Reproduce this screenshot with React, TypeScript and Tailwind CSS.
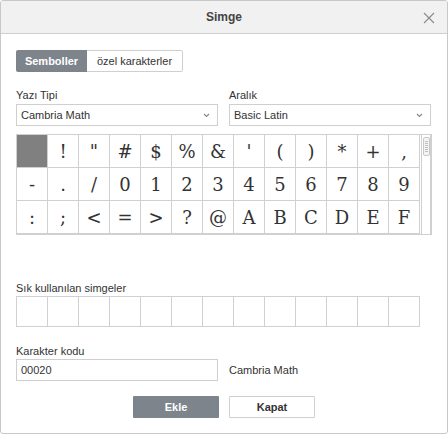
import React from "react";

const glyphs = [
  " ", "!", "\"", "#", "$", "%", "&", "'", "(", ")", "*", "+", ",",
  "-", ".", "/", "0", "1", "2", "3", "4", "5", "6", "7", "8", "9",
  ":", ";", "<", "=", ">", "?", "@", "A", "B", "C", "D", "E", "F",
];

function Chevron() {
  return (
    <svg width="7" height="5" viewBox="0 0 7 5" className="absolute right-[7px] top-[8px]">
      <path d="M1 1 L3.5 3.5 L6 1" fill="none" stroke="#888" strokeWidth="1.1" />
    </svg>
  );
}

function Select({ value }: { value: string }) {
  return (
    <div className="relative h-[22px] border border-[#cfcfcf] bg-white pl-[4px] text-[11px] leading-[20px] text-[#333]">
      {value}
      <Chevron />
    </div>
  );
}

export default function App() {
  return (
    <div
      className="w-[448px] h-[434px] flex flex-col bg-white border border-[#c8c8c8] rounded-[3px] overflow-hidden text-[#333]"
      style={{ fontFamily: '"Liberation Sans", Arial, sans-serif' }}
    >
      <div className="relative h-[33px] shrink-0 bg-[#f1f1f1] border-b border-[#cfcfcf] flex items-center justify-center">
        <span className="text-[12px] font-bold text-[#444]">Simge</span>
        <svg width="12" height="12" viewBox="0 0 12 12" className="absolute right-[12px] top-[11px]">
          <path d="M1 1 L11 11 M11 1 L1 11" stroke="#8a8a8a" strokeWidth="1.1" />
        </svg>
      </div>

      <div className="px-[15px] flex flex-col">
        <div className="mt-[16px] flex h-[22px] text-[11px]">
          <div className="w-[71px] bg-[#7e848b] text-white font-bold flex items-center justify-center rounded-l-[2px]">
            Semboller
          </div>
          <div className="w-[96px] border border-[#cfcfcf] border-l-0 bg-white flex items-center justify-center rounded-r-[2px]">
            özel karakterler
          </div>
        </div>

        <div className="mt-[17px] flex gap-[11px]">
          <div className="w-[202px] flex flex-col">
            <div className="text-[11px] leading-[13px] mb-[2px]">Yazı Tipi</div>
            <Select value="Cambria Math" />
          </div>
          <div className="w-[202px] flex flex-col">
            <div className="text-[11px] leading-[13px] mb-[2px]">Aralık</div>
            <Select value="Basic Latin" />
          </div>
        </div>

        <div className="mt-[8px] w-[416px] h-[101px] border border-[#d0d0d0] flex">
          <div className="grid grid-cols-[repeat(13,31px)] grid-rows-[repeat(3,33px)]">
            {glyphs.map((g, i) => (
              <div
                key={i}
                className={`border-r border-b border-[#d0d0d0] flex items-center justify-center text-[18px] text-[#333] ${
                  i === 0 ? "bg-[#808080]" : ""
                }`}
                style={{ fontFamily: '"DejaVu Serif", "Liberation Serif", serif' }}
              >
                {g}
              </div>
            ))}
          </div>
          <div className="ml-[1px] w-[10px] h-[99px] border-l border-r border-[#d0d0d0] bg-white pt-[2px] flex justify-center">
            <div className="w-[7px] h-[19px] border border-[#c8c8c8] rounded-[2px] bg-[#f4f4f4] flex flex-col items-center justify-center gap-[1px]">
              {Array(6)
                .fill(0)
                .map((_, i) => (
                  <div key={i} className="w-[3px] h-[1px] bg-[#c0c0c0]" />
                ))}
            </div>
          </div>
        </div>

        <div className="mt-[47px] text-[11px] leading-[13px] mb-[1px]">Sık kullanılan simgeler</div>
        <div className="flex w-[404px] h-[31px] border-t border-l border-[#d0d0d0]">
          {Array(13)
            .fill(0)
            .map((_, i) => (
              <div key={i} className="w-[31px] h-[30px] border-r border-b border-[#d0d0d0]" />
            ))}
        </div>

        <div className="mt-[18px] text-[11px] leading-[13px] mb-[1px]">Karakter kodu</div>
        <div className="flex items-center gap-[11px]">
          <div className="w-[202px] h-[22px] border border-[#cfcfcf] pl-[4px] text-[11px] leading-[20px]">
            00020
          </div>
          <span className="text-[11px]">Cambria Math</span>
        </div>

        <div className="mt-[15px] flex justify-center gap-[10px]">
          <div className="w-[86px] h-[22px] bg-[#7e848b] text-white text-[11px] font-bold flex items-center justify-center rounded-[1px]">
            Ekle
          </div>
          <div className="w-[86px] h-[22px] border border-[#cfcfcf] bg-white text-[11px] font-bold flex items-center justify-center rounded-[1px]">
            Kapat
          </div>
        </div>
      </div>
    </div>
  );
}
